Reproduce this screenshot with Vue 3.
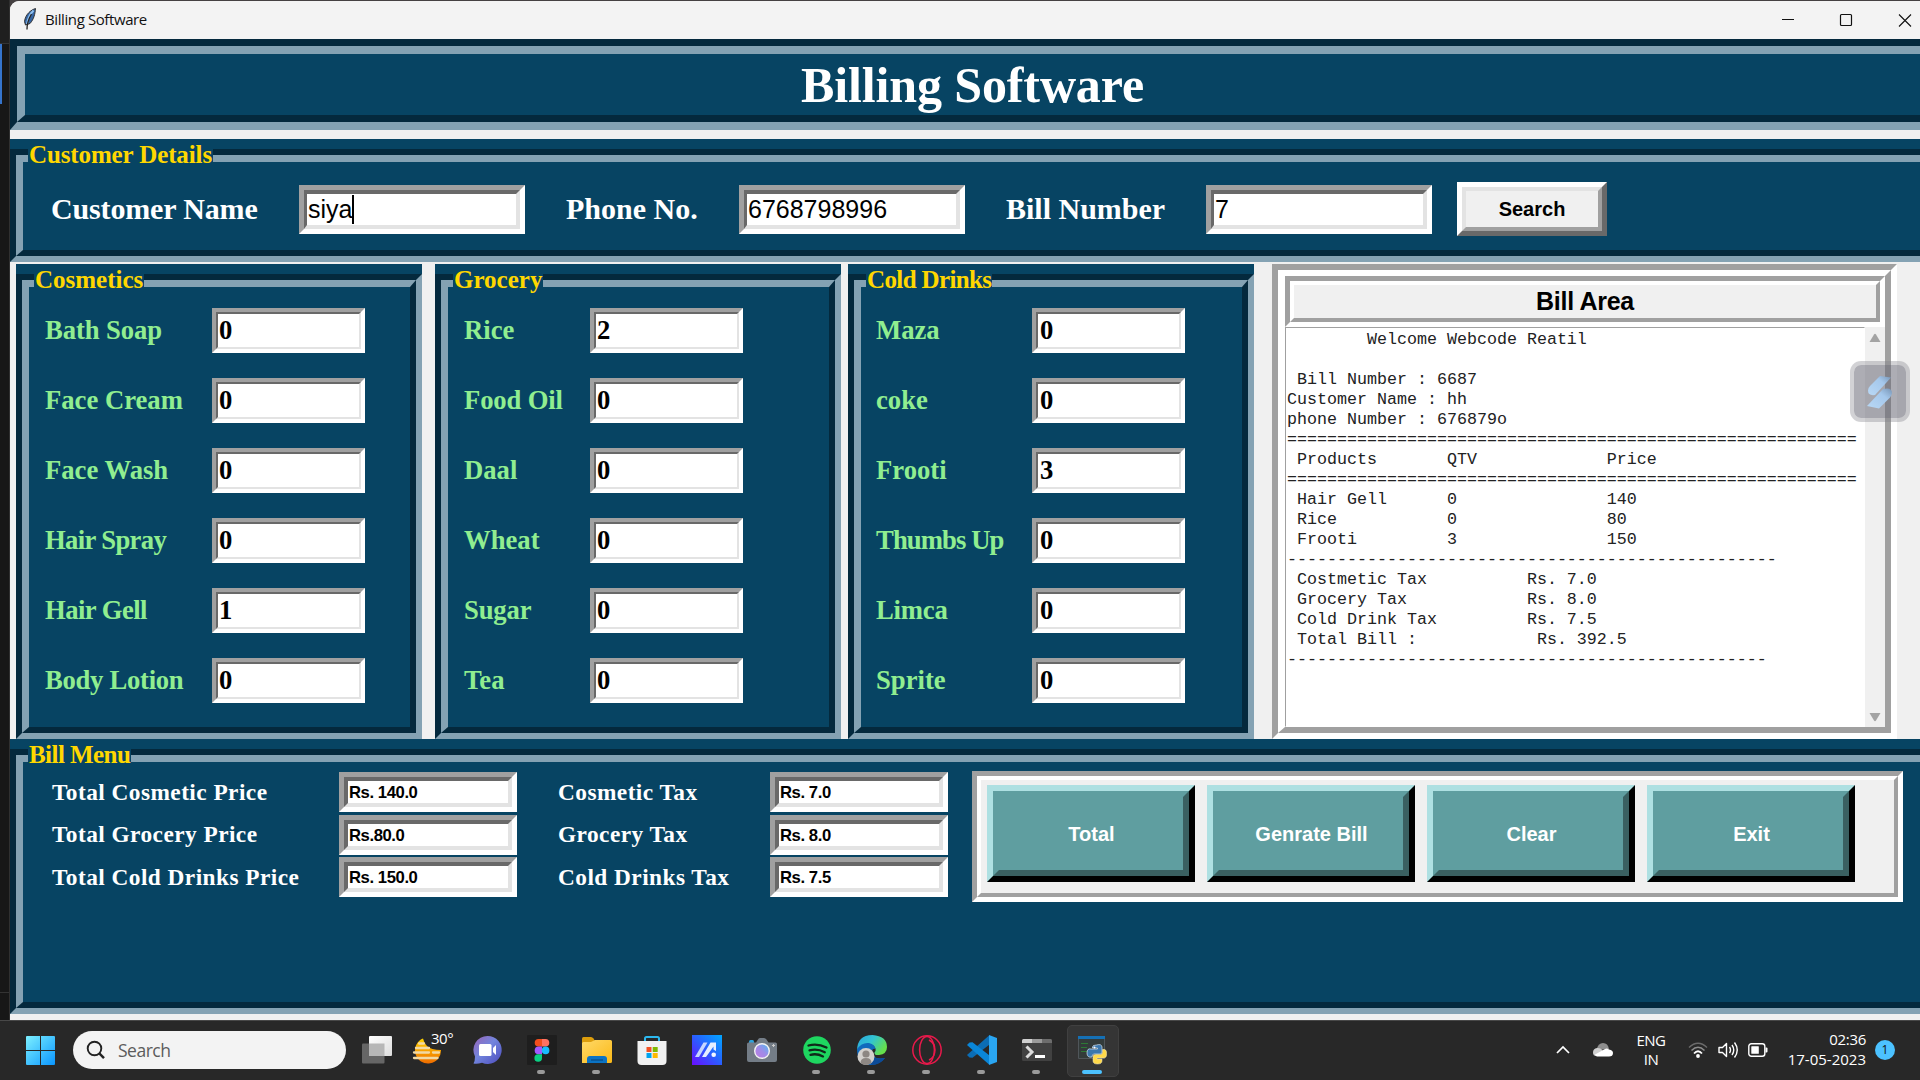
<script setup>
// third value: tracking in px
const groups = [
  { key: 'cosmetics', title: 'Cosmetics', track: 0, items: [['Bath Soap', 0, -0.1], ['Face Cream', 0, 0], ['Face Wash', 0, 0], ['Hair Spray', 0, -0.65], ['Hair Gell', 1, -0.55], ['Body Lotion', 0, -0.28]] },
  { key: 'grocery', title: 'Grocery', track: 0, items: [['Rice', 2, 0], ['Food Oil', 0, -0.15], ['Daal', 0, 0], ['Wheat', 0, 0], ['Sugar', 0, -0.15], ['Tea', 0, 0]] },
  { key: 'drinks', title: 'Cold Drinks', track: -0.62, items: [['Maza', 0, 0], ['coke', 0, 0], ['Frooti', 3, 0], ['Thumbs Up', 0, -0.9], ['Limca', 0, -0.2], ['Sprite', 0, 0]] }
]

const totals = [
  ['Total Cosmetic Price', 'Rs. 140.0', 'Cosmetic Tax', 'Rs. 7.0'],
  ['Total Grocery Price', 'Rs.80.0', 'Grocery Tax', 'Rs. 8.0'],
  ['Total Cold Drinks Price', 'Rs. 150.0', 'Cold Drinks Tax', 'Rs. 7.5']
]

const actions = ['Total', 'Genrate Bill', 'Clear', 'Exit']

const row = (a, b, c) => (' ' + a).padEnd(16) + String(b).padEnd(16) + c
const tax = (a, b) => (' ' + a).padEnd(24) + b
const bill = [
  '        Welcome Webcode Reatil',
  '',
  ' Bill Number : 6687',
  'Customer Name : hh',
  'phone Number : 676879o',
  '='.repeat(57),
  row('Products', 'QTV', 'Price'),
  '='.repeat(57),
  row('Hair Gell', 0, 140),
  row('Rice', 0, 80),
  row('Frooti', 3, 150),
  '-'.repeat(49),
  tax('Costmetic Tax', 'Rs. 7.0'),
  tax('Grocery Tax', 'Rs. 8.0'),
  tax('Cold Drink Tax', 'Rs. 7.5'),
  tax('Total Bill :', ' Rs. 392.5'),
  '-'.repeat(48)
].join('\n')
</script>

<template>
  <div class="desktop">
    <div class="main">
      <aside class="behind"><i class="behind-top"></i><i class="behind-blue"></i><i class="behind-rest"></i></aside>
      <div class="window">
        <header class="titlebar">
          <svg class="feather" width="14" height="22" viewBox="0 0 14 22">
            <path d="M12.5.5C8 2 2.500 6 1.500 13.500L2.500 17l4.500-1.500C11 11 12 6 12.500.5z" fill="#3465a4" stroke="#333" stroke-width="1" />
            <path d="M10.500 2.500C7 6 5 10 4 16" stroke="#8fc0f0" stroke-width="2" fill="none" />
            <path d="M8.500 6C5.500 11 4 16 4 21.500" stroke="#222" stroke-width="1.300" fill="none" />
          </svg>
          <span class="wintitle">Billing Software</span>
          <svg class="winbtns" width="134" height="18" viewBox="0 0 134 18">
            <path d="M1 8.500H13" stroke="#111" />
            <rect x="59.500" y="3.500" width="11" height="11" rx="1" fill="none" stroke="#111" stroke-width="1.200" />
            <path d="M118 3.500l12 12m0-12l-12 12" stroke="#111" stroke-width="1.100" />
          </svg>
        </header>

        <div class="bevel sunk banner"><div class="bevel up fill"><h1>Billing Software</h1></div></div>

        <section class="frame customer">
          <div class="bevel sunk"><div class="bevel up form">
            <label class="w1">Customer Name</label>
            <span class="entry big"><span class="field">siya<i class="caret"></i></span></span>
            <label class="w2">Phone No.</label>
            <span class="entry big"><span class="field">6768798996</span></span>
            <label class="w3">Bill Number</label>
            <span class="entry big"><span class="field">7</span></span>
            <button class="search"><span>Search</span></button>
          </div></div>
          <h2 class="legend long">Customer Details</h2>
        </section>

        <div class="middle">
          <section v-for="g in groups" :key="g.key" class="frame products" :class="g.key">
            <div class="bevel sunk"><div class="bevel up list">
              <div v-for="it in g.items" :key="it[0]" class="product">
                <label :style="{ letterSpacing: it[2] + 'px' }">{{ it[0] }}</label>
                <span class="entry small"><span class="field">{{ it[1] }}</span></span>
              </div>
            </div></div>
            <h2 class="legend" :style="{ letterSpacing: g.track + 'px' }">{{ g.title }}</h2>
          </section>
          <section class="billarea">
            <div class="billinner">
              <div class="billtitle"><div>Bill Area</div></div>
              <div class="billbody">
                <pre>{{ bill }}</pre>
                <div class="scroll">
                  <svg width="12" height="10" viewBox="0 0 12 10"><path d="M.5 9L5 1.500q1-1.500 2 0L11.500 9z" fill="#a3a3a3" /></svg>
                  <svg width="12" height="10" viewBox="0 0 12 10"><path d="M.5 1L5 8.500q1 1.500 2 0L11.500 1z" fill="#a3a3a3" /></svg>
                </div>
              </div>
            </div>
            <div class="floater">
              <svg width="26" height="36" viewBox="0 0 26 36">
                <defs><linearGradient id="fl" x1="0" y1="1" x2="1" y2="0"><stop offset="0" stop-color="#b9d8f5" /><stop offset=".65" stop-color="#a5c8ec" /><stop offset="1" stop-color="#7895b5" /></linearGradient></defs>
                <path d="M13 2l11 1.500L8 21Q1 22 1 16.500 1 14 3 12z" fill="url(#fl)" />
                <path d="M16 15q9-2 9 4 0 2-2 4.500L12 34.500 0 32z" fill="url(#fl)" />
              </svg>
            </div>
          </section>
        </div>

        <section class="frame menu">
          <div class="bevel sunk"><div class="bevel up menubody">
            <div class="totals">
              <div v-for="t in totals" :key="t[0]" class="totalrow">
                <label class="t1">{{ t[0] }}</label>
                <span class="entry price"><span class="field">{{ t[1] }}</span></span>
                <label class="t2">{{ t[2] }}</label>
                <span class="entry price"><span class="field">{{ t[3] }}</span></span>
              </div>
            </div>
            <div class="actions"><div class="actionsin">
              <button v-for="a in actions" :key="a" class="action"><span>{{ a }}</span></button>
            </div></div>
          </div></div>
          <h2 class="legend tight">Bill Menu</h2>
        </section>
      </div>
    </div>

    <footer class="taskbar">
      <svg class="start" width="29" height="29" viewBox="0 0 29 29">
        <defs><linearGradient id="win" x1="0" y1="0" x2="1" y2="1"><stop offset="0" stop-color="#7df0ff" /><stop offset="1" stop-color="#0a96ff" /></linearGradient></defs>
        <path d="M1 0H14V14H0V1Q0 0 1 0zM15 0H28Q29 0 29 1V14H15zM0 15H14V29H1Q0 29 0 28zM15 15H29V28Q29 29 28 29H15z" fill="url(#win)" />
      </svg>
      <div class="tasksearch">
        <svg width="20" height="20" viewBox="0 0 20 20" fill="none" stroke="#222"><circle cx="8.500" cy="8.500" r="6.800" stroke-width="1.900" /><path d="M13.300 13.300l4.700 4.900" stroke-width="2.400" /></svg>
        <span>Search</span>
      </div>
      <div class="apps">
        <div class="app">
          <svg width="30" height="30" viewBox="0 0 30 30">
            <defs><linearGradient id="tv" x1="0" y1="0" x2="1" y2="1"><stop offset="0" stop-color="#fff" /><stop offset="1" stop-color="#ddd" /></linearGradient></defs>
            <rect x="0" y="8.500" width="22.500" height="20" rx="1" fill="#666" /><rect x="7" y="1" width="23" height="20" rx="1" fill="url(#tv)" /><path d="M7 8.500H22.500V21H7z" fill="#b7b7b7" />
          </svg>
        </div>
        <div class="app weather">
          <svg width="36" height="30" viewBox="0 0 36 30">
            <defs><linearGradient id="sun" x1="0" y1="0" x2="0" y2="1"><stop offset="0" stop-color="#ffd400" /><stop offset="1" stop-color="#ef6c00" /></linearGradient></defs>
            <path d="M11 3.500A13 13 0 1 0 29 15Q19 15 15 11 12 8 11 3.500z" fill="url(#sun)" />
            <path d="M7 8.500h5M2 17.500h15M21 17.500h6M4 13h13M2 23h23.500" stroke="#f1d9a4" stroke-width="2.300" stroke-linecap="round" />
          </svg>
          <span class="temp">30°</span>
        </div>
        <div class="app">
          <svg width="30" height="30" viewBox="0 0 30 30">
            <defs><linearGradient id="ch" x1="0" y1="0" x2="1" y2="1"><stop offset="0" stop-color="#9a63b5" /><stop offset=".45" stop-color="#7285dd" /><stop offset="1" stop-color="#4c4bbd" /></linearGradient></defs>
            <path d="M15.500 1A14 14 0 1 1 10 27.800Q5 29.500 1.500 28.500 3 26 3 21.500A14 14 0 0 1 15.500 1z" fill="url(#ch)" />
            <rect x="7" y="9" width="12.500" height="12" rx="1.500" fill="#fff" /><path d="M21 13l3-3v10l-3-3z" fill="#fff" />
          </svg>
        </div>
        <div class="app run">
          <svg width="30" height="30" viewBox="0 0 30 30">
            <rect width="30" height="30" rx="1" fill="#1e1e1e" />
            <path d="M15 4h-3.500a3.800 3.800 0 0 0 0 7.600H15z" fill="#f24e1e" /><path d="M15 4h3.500a3.800 3.800 0 0 1 0 7.600H15z" fill="#ff7262" />
            <path d="M15 11.600h-3.500a3.800 3.800 0 0 0 0 7.600H15z" fill="#a259ff" /><circle cx="18.600" cy="15.400" r="3.800" fill="#1abcfe" />
            <path d="M15 19.200h-3.500a3.800 3.800 0 1 0 3.500 3.800z" fill="#0acf83" />
          </svg>
        </div>
        <div class="app run">
          <svg width="30" height="30" viewBox="0 0 30 30">
            <defs><linearGradient id="fo" x1="0" y1="0" x2="1" y2="1"><stop offset="0" stop-color="#ffd968" /><stop offset="1" stop-color="#fbb917" /></linearGradient></defs>
            <path d="M0 3.500Q0 2 1.500 2H9q1.500 0 2.500 1.500L13 6v6H0z" fill="#dc9d0c" /><path d="M0 8.500Q0 7 1.500 7H9l4-2h15.500Q30 5 30 6.500v20Q30 28 28.500 28H0z" fill="url(#fo)" />
            <path d="M5 28v-4q0-3 3-3h14q3 0 3 3v4z" fill="#0b73c4" /><path d="M9 25H21" stroke="#084b85" stroke-width="1.200" />
          </svg>
        </div>
        <div class="app">
          <svg width="30" height="30" viewBox="0 0 30 30">
            <path d="M8 8V3.500Q8 2 9.500 2h11Q22 2 22 3.500V8" fill="none" stroke="#2cb8ef" stroke-width="2" />
            <path d="M.5 6H29.500V26q0 4-4 4h-21q-4 0-4-4z" fill="#f1f1f1" />
            <path d="M9.500 12h5v5h-5z" fill="#f25022" /><path d="M15.700 12h5v5h-5z" fill="#7fba00" /><path d="M9.500 18h5v5h-5z" fill="#00a4ef" /><path d="M15.700 18h5v5h-5z" fill="#ffb900" />
          </svg>
        </div>
        <div class="app">
          <svg width="30" height="30" viewBox="0 0 30 30">
            <defs><linearGradient id="ma" x1="0" y1="1" x2="1" y2="0"><stop offset="0" stop-color="#6a0cff" /><stop offset=".55" stop-color="#2565ff" /><stop offset="1" stop-color="#00a8ff" /></linearGradient></defs>
            <rect width="30" height="30" fill="url(#ma)" /><path d="M3 22L11.500 7.500h4L7 22z" fill="#c6d6ff" /><path d="M10 22L18.500 7.500H24V16l-2.500-1.500v-3L14 22z" fill="#e6eeff" /><circle cx="21.700" cy="19.800" r="2.300" fill="#f3f7ff" />
          </svg>
        </div>
        <div class="app">
          <svg width="30" height="30" viewBox="0 0 30 30">
            <defs><linearGradient id="cam" x1="1" y1="0" x2="0" y2="1"><stop offset="0" stop-color="#4bbdf2" /><stop offset=".5" stop-color="#a08be8" /><stop offset="1" stop-color="#c07be0" /></linearGradient></defs>
            <rect x="2" y="5" width="5" height="4" rx="1.500" fill="#2ea3dc" /><path d="M1.500 7.500H9l2-3Q11.500 3 13 3h4q1.500 0 2.500 1.500l2 3h7q1.500 0 1.500 1.500v16q0 2-2 2H2q-2 0-2-2V9q0-1.500 1.500-1.500z" fill="#747d87" />
            <circle cx="15" cy="16" r="7.300" fill="url(#cam)" stroke="#f2f2f2" stroke-width="1.400" /><path d="M25 10.500h3M26.500 9v3" stroke="#ccc" />
          </svg>
        </div>
        <div class="app run">
          <svg width="30" height="30" viewBox="0 0 30 30"><circle cx="15" cy="15" r="13.800" fill="#1ed760" /><path d="M6.500 10.500q9-2.500 18 2M7.500 15.300q8-2.100 15.300 1.900M8.500 19.800q6.500-1.600 12.500 1.600" fill="none" stroke="#10291a" stroke-width="2.300" stroke-linecap="round" /></svg>
        </div>
        <div class="app run">
          <svg width="30" height="30" viewBox="0 0 30 30">
            <defs><linearGradient id="ed" x1="0" y1="0" x2="1" y2=".5"><stop offset="0" stop-color="#2ba5dc" /><stop offset=".5" stop-color="#32c3d2" /><stop offset="1" stop-color="#66e04c" /></linearGradient></defs>
            <path d="M0 16Q0 0 15.500 0 30 1 30 12q0 7-8 8-5 .500-4.500-2.500 2-2 .500-5-3-5-10-3-5 2-8 6.500z" fill="url(#ed)" />
            <path d="M0 14Q5 7 12 8q6 1.500 6.500 6-3-1-4 3Q15 25 28 23 22 30 14 30 0 29 0 14z" fill="#1169bd" /><path d="M12 17q1 8 16 6-5 7-13 7-6-4-3-13z" fill="#0c4b98" />
            <circle cx="9" cy="21.500" r="8.500" fill="#d3d0cd" /><circle cx="9" cy="19" r="3.600" fill="#8d8783" /><path d="M3.500 28q0-5 5.500-5t5.500 5q-5.500 4-11 0z" fill="#8d8783" />
          </svg>
        </div>
        <div class="app run">
          <svg width="30" height="30" viewBox="0 0 30 30" fill="none" stroke="#e8194b"><circle cx="15" cy="15" r="14.200" stroke-width="1.500" /><ellipse cx="15" cy="15" rx="7.400" ry="13.600" stroke-width="1.500" /><path d="M17 5q6 3 6 10t-6 10" stroke-width="1.400" /></svg>
        </div>
        <div class="app run">
          <svg width="30" height="30" viewBox="0 0 30 30"><path d="M22 .5L0 20l2.500 2.500 3 .3L22.500 9.500z" fill="#0b6db5" /><path d="M22 29.500L0 10l2.500-2.500 3-.3L22.500 20.500z" fill="#0a86d8" /><path d="M22 0l8 3v24l-8 3z" fill="#2aa6f2" /></svg>
        </div>
        <div class="app run">
          <svg width="30" height="30" viewBox="0 0 30 30"><path d="M0 5.500Q0 4 1.500 4h27Q30 4 30 5.500V24.500Q30 26 28.500 26h-27Q0 26 0 24.500z" fill="#414141" /><path d="M0 8V5.500Q0 4 1.500 4H10v4z" fill="#d0d0d0" /><path d="M10 4h10v4H10z" fill="#9b9b9b" /><path d="M20 4h8.500Q30 4 30 5.500V8H20z" fill="#6d6d6d" /><path d="M4.500 11.500l5.500 5.500-5.500 5.500" fill="none" stroke="#dcdcdc" stroke-width="3" /><path d="M13 21.500h10" stroke="#fff" stroke-width="3" /></svg>
        </div>
        <div class="app active">
          <svg width="30" height="30" viewBox="0 0 30 30">
            <path d="M1.500 1.500h26v22h-26z" fill="#333b3a" stroke="#50565a" /><path d="M1 1h27v3H1z" fill="#1570b5" /><path d="M4 8.500h7M4 12.500h6M4 16.500h9" stroke="#2c7a35" />
            <path d="M19.500 10q5-1.500 5.500 2v5q0 2-2 2h-6q-2 0-2 3-5 1-5-4t4-4h6.500v-1h-5V12q0-2 4-2z" fill="#3b77ad" stroke="#d6e3ee" stroke-width=".7" />
            <path d="M25.500 14.500q4-1 4.200 4t-4 4.500H20v1h5v2q0 3-4.500 3t-4.500-3v-4q0-2.500 2.500-2.500h5q2 0 2-2z" fill="#ffd94a" stroke="#efe7c6" stroke-width=".5" /><circle cx="17.500" cy="12.500" r="1" fill="#fff" />
          </svg>
        </div>
      </div>

      <div class="tray">
        <svg class="chev" width="16" height="12" viewBox="0 0 16 12"><path d="M2 9l6-6 6 6" fill="none" stroke="#fff" stroke-width="1.700" /></svg>
        <svg class="cloud" width="22" height="16" viewBox="0 0 22 16"><path d="M4.500 8Q6 1 11 1t6 6z" fill="#8e8e8e" /><path d="M4.500 14Q1 14 1 10.500 1 6.500 5 6q4-.3 6 3z" fill="#cfcfcf" /><path d="M3 12.500L13 7q2-1 4 .5 4 .500 4 3.500 0 3.500-4 3.500H5q-2-.5-2-2z" fill="#fff" /></svg>
        <div class="lang"><span>ENG</span><span>IN</span></div>
        <svg class="wifi" width="20" height="18" viewBox="0 0 20 18" fill="none"><path d="M1 6.500Q10-2 19 6.500" stroke="#6b6b6b" stroke-width="1.500" /><path d="M3.500 9.500Q10 3 16.500 9.500" stroke="#8c8c8c" stroke-width="1.500" /><path d="M6 12.500Q10 8 14 12.500" stroke="#fff" stroke-width="1.800" /><circle cx="10" cy="15" r="1.900" fill="#fff" /></svg>
        <svg class="vol" width="21" height="18" viewBox="0 0 21 18" fill="none" stroke="#fff" stroke-width="1.400"><path d="M1 6.500h3.500l4-4v13l-4-4H1z" stroke-linejoin="round" /><path d="M11.500 6q2 3 0 6M14 4q3.500 5 0 10M16.500 1.500q5.500 7.500 0 15" /></svg>
        <svg class="batt" width="20" height="14" viewBox="0 0 20 14"><rect x=".8" y=".8" width="16" height="12.400" rx="2.500" fill="none" stroke="#fff" stroke-width="1.400" /><rect x="3.300" y="3.300" width="7.500" height="7.400" rx=".5" fill="#fff" /><path d="M17.500 4.500h1q1 0 1 1v3q0 1-1 1h-1z" fill="#fff" /></svg>
        <div class="clock"><span>02:36</span><span>17-05-2023</span></div>
        <span class="badge">1</span>
      </div>
    </footer>
  </div>
</template>

<style>
html, body { margin: 0; background: #181818; overflow: hidden; }
</style>

<style scoped>
* { box-sizing: border-box; }
h1, h2, pre { margin: 0; }
.desktop { width: 1920px; height: 1080px; overflow: hidden; display: flex; flex-direction: column; background: #171717; }
.main { height: 1020px; display: flex; padding-top: 1px; background: #454142; }
.behind { width: 10px; flex: none; margin-top: -1px; display: flex; flex-direction: column; background: #171717; border-right: 1px solid #303030; }
.behind-top { height: 44px; background: #1f1f1f; border-bottom: 1px solid #343434; }
.behind-blue { height: 60px; width: 2px; background: #3574cc; }
.behind-rest { height: 889px; border-bottom: 1px solid #333; }
.window { width: 1910px; flex: none; background: #f0f0f0; display: flex; flex-direction: column; border-radius: 9px 0 0 0; overflow: hidden; }
.titlebar { height: 38px; flex: none; background: #f3f3f3; display: flex; align-items: center; padding-left: 13px; }
.feather { margin-top: -2px; }
.wintitle { margin: -2px 0 0 8px; font: 15px/20px "Open Sans", "Noto Sans", sans-serif; letter-spacing: -.4px; color: #111; }
.winbtns { margin-left: auto; margin-right: 5px; margin-top: -1px; }

/* groove frames: a sunken outer edge around a raised inner one */
.bevel { border: 6px solid; }
.sunk { border-color: #04293d #84a2b3 #84a2b3 #04293d; }
.up { border-color: #84a2b3 #04293d #04293d #84a2b3; }
.frame { background: #074463; position: relative; padding-top: 10px; }
.frame > .sunk { height: 100%; border-width: 6px; }
.frame .up { height: 100%; border-width: 7px 6px 6px 7px; }
.customer > .sunk, .menu > .sunk, .banner, .banner > .up, .customer .up, .menu .up { border-right-width: 0 !important; }
.banner { height: 91px; flex: none; border-width: 7px; border-bottom-width: 8px; background: #074463; margin-bottom: 9px; }
.banner > .up { border-width: 8px; border-bottom-width: 7px; height: 100%; }
h1 { font: bold 50px/58px "Liberation Serif", serif; letter-spacing: -.12px; color: #fff; text-align: center; padding-top: 2px; }
.legend { position: absolute; left: 18px; top: 3px; height: 26px; padding: 0 1px; background: #074463; color: gold; font: bold 25px/25px "Liberation Serif", serif; white-space: nowrap; }
.legend.long { letter-spacing: -.12px; }
.legend.tight { letter-spacing: -.55px; }
label { white-space: pre; flex: none; font-family: "Liberation Serif", serif; font-weight: bold; color: #fff; }

.entry { display: block; flex: none; border: 5px solid; border-color: #a0a0a0 #fff #fff #a0a0a0; }
.field { display: flex; align-items: center; height: 100%; border: 4px solid; border-color: #696969 #e3e3e3 #e3e3e3 #696969; background: #fff; color: #000; padding-left: 1px; white-space: pre; }
.big { width: 226px; height: 49px; }
.big .field { font: 25px/30px "Liberation Sans", sans-serif; border-left-width: 3px; }
.caret { width: 2px; height: 29px; background: #000; margin-left: 0; }

.customer { height: 123px; flex: none; margin-bottom: 2px; }
.form { display: flex; align-items: center; padding: 6px 0 0 28px; }
.form label { font-size: 30px; line-height: 34px; }
.w1 { width: 248px; letter-spacing: -.15px; }
.w2 { width: 214px; padding-left: 41px; }
.w3 { width: 241px; padding-left: 41px; }
button { font-family: "Liberation Sans", sans-serif; font-weight: bold; font-size: 20px; padding: 0; margin: 0; flex: none; }
button span { display: flex; align-items: center; justify-content: center; width: 100%; height: 100%; border: 4px solid; }
.search { width: 150px; height: 54px; margin-left: 25px; background: #f0f0f0; color: #000; border: 5px solid; border-color: #fff #696969 #696969 #fff; }
.search span { border-color: #e3e3e3 #a0a0a0 #a0a0a0 #e3e3e3; }

.middle { height: 475px; flex: none; display: flex; padding-left: 6px; }
.products { width: 406px; height: 475px; flex: none; }
.products.grocery { margin-left: 13px; }
.products.drinks { margin-left: 7px; }
.list { padding: 21px 0 0 16px; }
.product { display: flex; align-items: center; height: 44px; margin-bottom: 26px; }
.product label { font-size: 26.670px; line-height: 30px; color: #90ee90; width: 167px; }
.grocery .product label { width: 126px; }
.drinks .product label { width: 156px; }
.drinks .list { padding-left: 15px; }
.small { width: 153px; height: 45px; border-width: 4px; }
.small .field { border-width: 2px; font: bold 26.670px/30px "Liberation Serif", serif; }
.drinks .small .field { padding-left: 2px; }

.billarea { width: 625px; height: 475px; margin-left: 18px; border: 6px solid; border-color: #a0a0a0 #fff #fff #a0a0a0; flex: none; position: relative; }
.billinner { height: 100%; border: 6px solid; border-left-width: 7px; border-color: #fff #a0a0a0 #a0a0a0 #fff; display: flex; flex-direction: column; }
.billtitle { height: 51px; flex: none; border: 5px solid; border-color: #a0a0a0 #fff #fff #a0a0a0; }
.billtitle div { height: 100%; border: 4px solid; border-color: #fff #a0a0a0 #a0a0a0 #fff; background: #f0f0f0; color: #000; font: bold 25px/33px "Liberation Sans", sans-serif; letter-spacing: -.3px; text-align: center; }
.billbody { flex: 1; display: flex; background: #fff; min-height: 0; }
pre { flex: 1; border: 1px solid; border-color: #a0a0a0 #fff #fff #a0a0a0; padding: 2px 0 0 1px; font: 16.670px/20px "Liberation Mono", monospace; color: #222; overflow: hidden; }
.scroll { width: 20px; background: #f0f0f0; display: flex; flex-direction: column; justify-content: space-between; align-items: center; padding: 6px 0 5px; }
.floater { position: absolute; left: 572px; top: 91px; width: 60px; height: 61px; border-radius: 11px; border: 4px solid rgba(125, 125, 135, .35); background: rgba(105, 105, 118, .55); display: flex; align-items: center; justify-content: center; background-clip: padding-box; }

.menu { height: 275px; flex: none; }
.menubody { display: flex; align-items: flex-start; padding: 9px 0 0 29px; }
.totals { display: flex; flex-direction: column; gap: 2.500px; }
.totals { padding-top: 1px; }
.totalrow { display: flex; align-items: center; }
.totalrow label { font-size: 23.330px; line-height: 28px; letter-spacing: .45px; margin-top: -1px; }
.t1 { width: 287px; }
.t2 { width: 253px; padding-left: 41px; }
.price { width: 178px; height: 40px; }
.price .field { font: bold 16.670px/20px "Liberation Sans", sans-serif; letter-spacing: -.42px; padding-top: 2px; }
.actions { margin-left: 24px; width: 931px; height: 131px; border: 5px solid; border-color: #a0a0a0 #fff #fff #a0a0a0; }
.actionsin { height: 100%; border: 4px solid; border-color: #fff #a0a0a0 #a0a0a0 #fff; background: #f0f0f0; padding: 5px 0 0 6px; display: flex; gap: 12px; }
.action { width: 208px; height: 97px; background: #5f9ea0; color: #fff; border: 6px solid; border-color: #aee0e2 #000 #000 #aee0e2; }
.action span { border-width: 6px; border-color: #5f9ea0 #3a6061 #3a6061 #5f9ea0; padding: 1px 0 0 1px; }

.taskbar { height: 60px; flex: none; background: #282828; border-top: 1px solid #484848; display: flex; align-items: center; font-family: "Open Sans", "Noto Sans", sans-serif; color: #fff; padding-bottom: 1px; }
.start { margin-left: 26px; flex: none; }
.tasksearch { width: 273px; height: 38px; margin-left: 18px; border-radius: 19px; background: #f3f3f3; display: flex; align-items: center; padding-left: 13px; color: #5c5c5c; font-size: 17.500px; flex: none; }
.tasksearch span { margin-left: 12px; letter-spacing: -.5px; }
.apps { display: flex; margin-left: 3px; flex: none; }
.app { width: 55px; height: 50px; display: flex; align-items: center; justify-content: center; position: relative; }
.run::after, .active::after { content: ""; position: absolute; left: 23px; bottom: 1px; width: 8px; height: 4px; border-radius: 2px; background: #9a9a9a; }
.active::before { content: ""; position: absolute; left: 3px; top: 0; width: 50px; height: 50px; border-radius: 5px; background: #353535; border: 1px solid #404040; }
.active svg { position: relative; }
.active::after { left: 18px; width: 20px; background: #4cc2ff; }
.weather svg { margin-left: -3px; }
.temp { position: absolute; left: 27px; top: 3px; font-size: 15px; line-height: 20px; letter-spacing: -.5px; }
.tray { margin-left: auto; display: flex; align-items: center; padding-right: 25px; font-size: 15px; }
.cloud { margin-left: 21px; }
.lang { display: flex; flex-direction: column; align-items: center; width: 34px; margin-left: 20px; line-height: 19.500px; letter-spacing: -.5px; }
.wifi { margin-left: 20px; }
.vol { margin-left: 10px; }
.batt { margin-left: 9px; }
.clock { display: flex; flex-direction: column; align-items: flex-end; width: 80px; margin-left: 18px; line-height: 20px; margin-top: -2px; }
.clock span:first-child { letter-spacing: -.3px; }
.badge { width: 20px; height: 20px; margin-left: 9px; border-radius: 50%; background: #4cc2ff; color: #111; font-size: 12px; line-height: 20px; text-align: center; }
</style>
